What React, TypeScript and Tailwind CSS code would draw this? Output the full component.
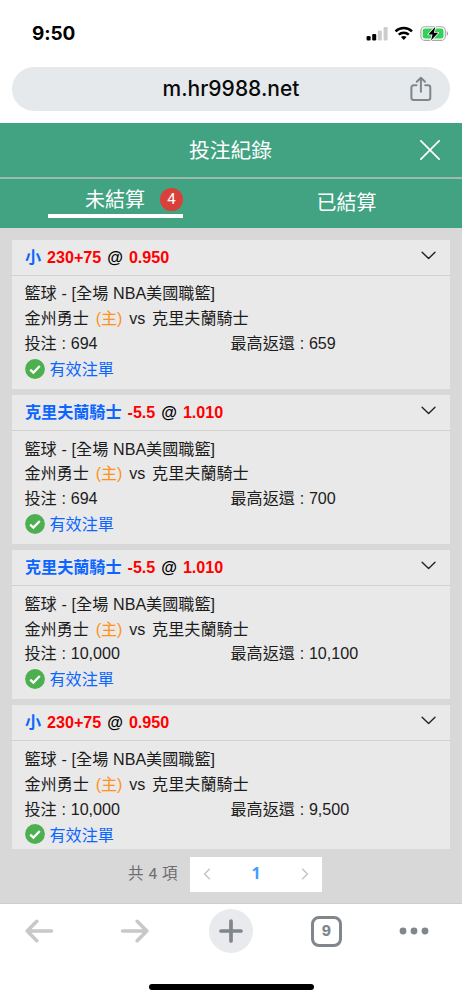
import { useState } from 'react';

type Bet = {
  id: number;
  pick: string;
  line: string;
  odds: string;
  stake: string;
  payout: string;
};

const BETS: Bet[] = [
  { id: 1, pick: '小', line: '230+75', odds: '0.950', stake: '694', payout: '659' },
  { id: 2, pick: '克里夫蘭騎士', line: '-5.5', odds: '1.010', stake: '694', payout: '700' },
  { id: 3, pick: '克里夫蘭騎士', line: '-5.5', odds: '1.010', stake: '10,000', payout: '10,100' },
  { id: 4, pick: '小', line: '230+75', odds: '0.950', stake: '10,000', payout: '9,500' },
];

function StatusBar() {
  return (
    <div className="h-[66px] shrink-0 flex items-start justify-between pl-8 pr-[13.5px]">
      <span className="mt-[20px] font-['Inter'] font-bold text-[19px] leading-[28px] tracking-[-0.1px] text-black">9:50</span>
      <div className="mt-[26px] flex items-center">
        <svg width="22" height="15" viewBox="0 0 22 15" className="mr-[6px]">
          <rect x="0.6" y="10" width="4" height="4.4" rx="1.2" fill="#000" />
          <rect x="6.2" y="8" width="4" height="6.4" rx="1.2" fill="#000" />
          <rect x="11.8" y="4.5" width="4" height="9.9" rx="1.2" fill="#ccc" />
          <rect x="17.6" y="1" width="4" height="13.4" rx="1.2" fill="#ccc" />
        </svg>
        <svg width="20" height="15" viewBox="0 0 20 15" className="mr-[6px]">
          <g fill="none" stroke="#000" strokeWidth="2.5">
            <path d="M1.5 5.4C6.2 0.9 13.3 0.9 18 5.4" />
            <path d="M4.7 8.7C7.6 6 11.9 6 14.8 8.7" />
          </g>
          <path d="M9.75 14 6.9 11.1C8.5 9.7 11 9.7 12.6 11.1Z" fill="#000" />
        </svg>
        <svg width="29" height="15" viewBox="0 0 29 15">
          <rect x="0.9" y="0.8" width="24.4" height="13.6" rx="4" fill="#fff" stroke="#a8a8a8" strokeWidth="1.1" />
          <rect x="2.7" y="2.6" width="20.8" height="10" rx="2.3" fill="#34d05b" />
          <path d="M26.7 5.2C28.6 5.9 28.6 9.2 26.7 9.9Z" fill="#a8a8a8" />
          <path d="M15.3 0.8 8.3 8.5H12.5L11 14.4 18.2 6.7H13.9Z" fill="#000" stroke="#fff" strokeWidth="1.6" paintOrder="stroke" strokeLinejoin="round" />
        </svg>
      </div>
    </div>
  );
}

function AddressBar() {
  return (
    <div className="h-[57px] shrink-0 px-[12px] pt-[0.5px]">
      <div className="h-[44px] rounded-full bg-[#e5e9ec] grid grid-cols-[1fr_auto_1fr] items-center">
        <span />
        <span className="font-['Inter'] font-medium text-[21px] leading-[28px] tracking-[0.03px] text-[#0a0a0a]">m.hr9988.net</span>
        <svg width="22" height="26" viewBox="0 0 22 26" fill="none" stroke="#80868b" strokeWidth="2" strokeLinecap="round" strokeLinejoin="round" className="justify-self-end mr-[18px]">
          <path d="M6.5 9.3H3.7C2.4 9.3 1.4 10.2 1.4 11.5V21.8C1.4 23.1 2.4 24.1 3.7 24.1H18C19.3 24.1 20.3 23.1 20.3 21.8V11.5C20.3 10.2 19.3 9.3 18 9.3H15.2" />
          <path d="M10.9 15.8V1.8M6.8 5.7 10.9 1.7 15 5.7" />
        </svg>
      </div>
    </div>
  );
}

function BetCard({ bet }: { bet: Bet }) {
  return (
    <div className="shrink-0 h-[149.2px] bg-[#e9e9e9]">
      <div className="h-[36px] pl-[13px] pr-[14px] flex justify-between border-b-[1.5px] border-[#d1d1d1] font-bold">
        <p className="leading-[34px] whitespace-pre [word-spacing:1.5px] text-black">
          <span className="text-[#0b66ff]">{bet.pick}</span>
          {' '}
          <span className="text-[#ff0000]">{bet.line}</span>
          {' @ '}
          <span className="text-[#ff0000]">{bet.odds}</span>
        </p>
        <svg width="15" height="9" viewBox="0 0 15 9" fill="none" stroke="#222" strokeWidth="1.4" strokeLinecap="round" strokeLinejoin="round" className="mt-[11px]">
          <path d="M1.1 1.3 7.6 7.4 14 1.3" />
        </svg>
      </div>
      <div className="pl-[12.5px] pt-[5.7px] leading-[24.8px]">
        <p className="[word-spacing:0.3px]">籃球 - [全場 NBA美國職籃]</p>
        <p className="[word-spacing:2.3px]">
          金州勇士 <span className="text-[#ff9119]">(主)</span> vs 克里夫蘭騎士
        </p>
        <div className="grid grid-cols-[206px_1fr] [word-spacing:0.3px]">
          <span>投注 : {bet.stake}</span>
          <span>最高返還 : {bet.payout}</span>
        </div>
        <div className="h-[26px] flex items-center gap-[5px] text-[#0b66ff]">
          <svg width="20" height="20" viewBox="0 0 20 20">
            <circle cx="10" cy="10" r="9.9" fill="#4caf50" />
            <path d="M5.2 10.6 8.4 13.6 14.8 7" fill="none" stroke="#fff" strokeWidth="2.3" />
          </svg>
          <span className="pt-px">有效注單</span>
        </div>
      </div>
    </div>
  );
}

function Pagination() {
  return (
    <div className="h-[54.5px] shrink-0 flex items-center justify-center pb-[3px] pr-[12px]">
      <span className="mr-[12px] text-[15.5px] text-[#6b6d70] font-['Roboto','Noto_Sans_CJK_TC',sans-serif] tracking-[0.5px]">共 4 項</span>
      <div className="w-[132px] h-[35px] px-[13px] bg-white flex items-center justify-between">
        <svg width="8" height="12" viewBox="0 0 8 12" fill="none" stroke="#c0c4cc" strokeWidth="1.4">
          <path d="M6.8 0.8 1.6 6 6.8 11.2" />
        </svg>
        <span className="pb-[2px] font-['Open_Sans',sans-serif] font-bold text-[16px] text-[#409eff]">1</span>
        <svg width="8" height="12" viewBox="0 0 8 12" fill="none" stroke="#c0c4cc" strokeWidth="1.4">
          <path d="M1.2 0.8 6.4 6 1.2 11.2" />
        </svg>
      </div>
    </div>
  );
}

function BrowserToolbar() {
  return (
    <div className="h-[97px] shrink-0 bg-white border-t border-[#cdcdcd] flex flex-col items-center">
      <div className="w-full h-[54px] pl-[24px] flex items-center">
        <svg width="30" height="24" viewBox="0 0 30 24" fill="none" stroke="#c8c8c8" strokeWidth="3.6" strokeLinecap="round" strokeLinejoin="round">
          <path d="M27.5 12H3.2M12.8 2.3 3.2 12 12.8 21.7" />
        </svg>
        <svg width="30" height="24" viewBox="0 0 30 24" fill="none" stroke="#c8c8c8" strokeWidth="3.6" strokeLinecap="round" strokeLinejoin="round" className="ml-[66px]">
          <path d="M2.5 12H26.8M17.2 2.3 26.8 12 17.2 21.7" />
        </svg>
        <div className="ml-[59px] size-[44px] rounded-full bg-[#e8eaed] flex items-center justify-center">
          <svg width="26" height="26" viewBox="0 0 26 26" stroke="#80868b" strokeWidth="3.7" strokeLinecap="round">
            <path d="M13 3V23M3 13H23" />
          </svg>
        </div>
        <div className="ml-[58px] size-[31px] rounded-[8px] border-[3px] border-[#80868b] flex items-center justify-center font-['Inter'] font-extrabold text-[14px] leading-none text-[#80868b]">9</div>
        <svg width="30" height="8" viewBox="0 0 30 8" fill="#80868b" className="ml-[57px]">
          <circle cx="4" cy="4" r="3.4" />
          <circle cx="15" cy="4" r="3.4" />
          <circle cx="26" cy="4" r="3.4" />
        </svg>
      </div>
      <div className="mt-[26px] w-[165px] h-[6px] rounded-full bg-black" />
    </div>
  );
}

export default function App() {
  const [tab, setTab] = useState<'open' | 'settled'>('open');

  return (
    <div className="w-[462px] h-[1000px] overflow-hidden flex flex-col bg-white text-[16.1px] text-[#1c1c1c] font-['Liberation_Sans','Noto_Sans_CJK_TC',sans-serif]">
      <StatusBar />
      <AddressBar />
      <header className="h-[56px] shrink-0 bg-[#41a381] border-b-2 border-[#a0b9ad] flex items-center justify-between pl-[41px] pr-[22px] text-white">
        <h1 className="flex-1 text-center text-[20.8px] leading-[54px] pt-[2px]">投注紀錄</h1>
        <button type="button" aria-label="close">
          <svg width="20" height="20" viewBox="0 0 20 20" stroke="#fff" strokeWidth="1.7" strokeLinecap="round">
            <path d="M0.9 0.9 19.1 19.1M19.1 0.9 0.9 19.1" />
          </svg>
        </button>
      </header>
      <nav className="h-[49px] shrink-0 grid grid-cols-2 bg-[#41a381] text-white text-[20px]">
        <button type="button" onClick={() => setTab('open')} className="flex justify-center">
          <span className={`w-[135px] h-[39px] flex items-center justify-between pl-[37px] border-b-4 ${tab === 'open' ? 'border-white' : 'border-transparent'}`}>
            <span className="pt-[6px]">未結算</span>
            <span className="size-[23px] mt-[6px] rounded-full bg-[#d9403a] flex items-center justify-center font-['Roboto'] text-[15px] leading-none">4</span>
          </span>
        </button>
        <button type="button" onClick={() => setTab('settled')} className="h-[48px]">已結算</button>
      </nav>
      <main className="flex-1 min-h-0 flex flex-col bg-[#d8d8d8]">
        <div className="flex-1 min-h-0 mt-[11.8px] ml-[12px] mr-[12.5px] flex flex-col gap-[6px] overflow-hidden">
          {BETS.map((bet) => (
            <BetCard key={bet.id} bet={bet} />
          ))}
        </div>
        <Pagination />
      </main>
      <BrowserToolbar />
    </div>
  );
}
